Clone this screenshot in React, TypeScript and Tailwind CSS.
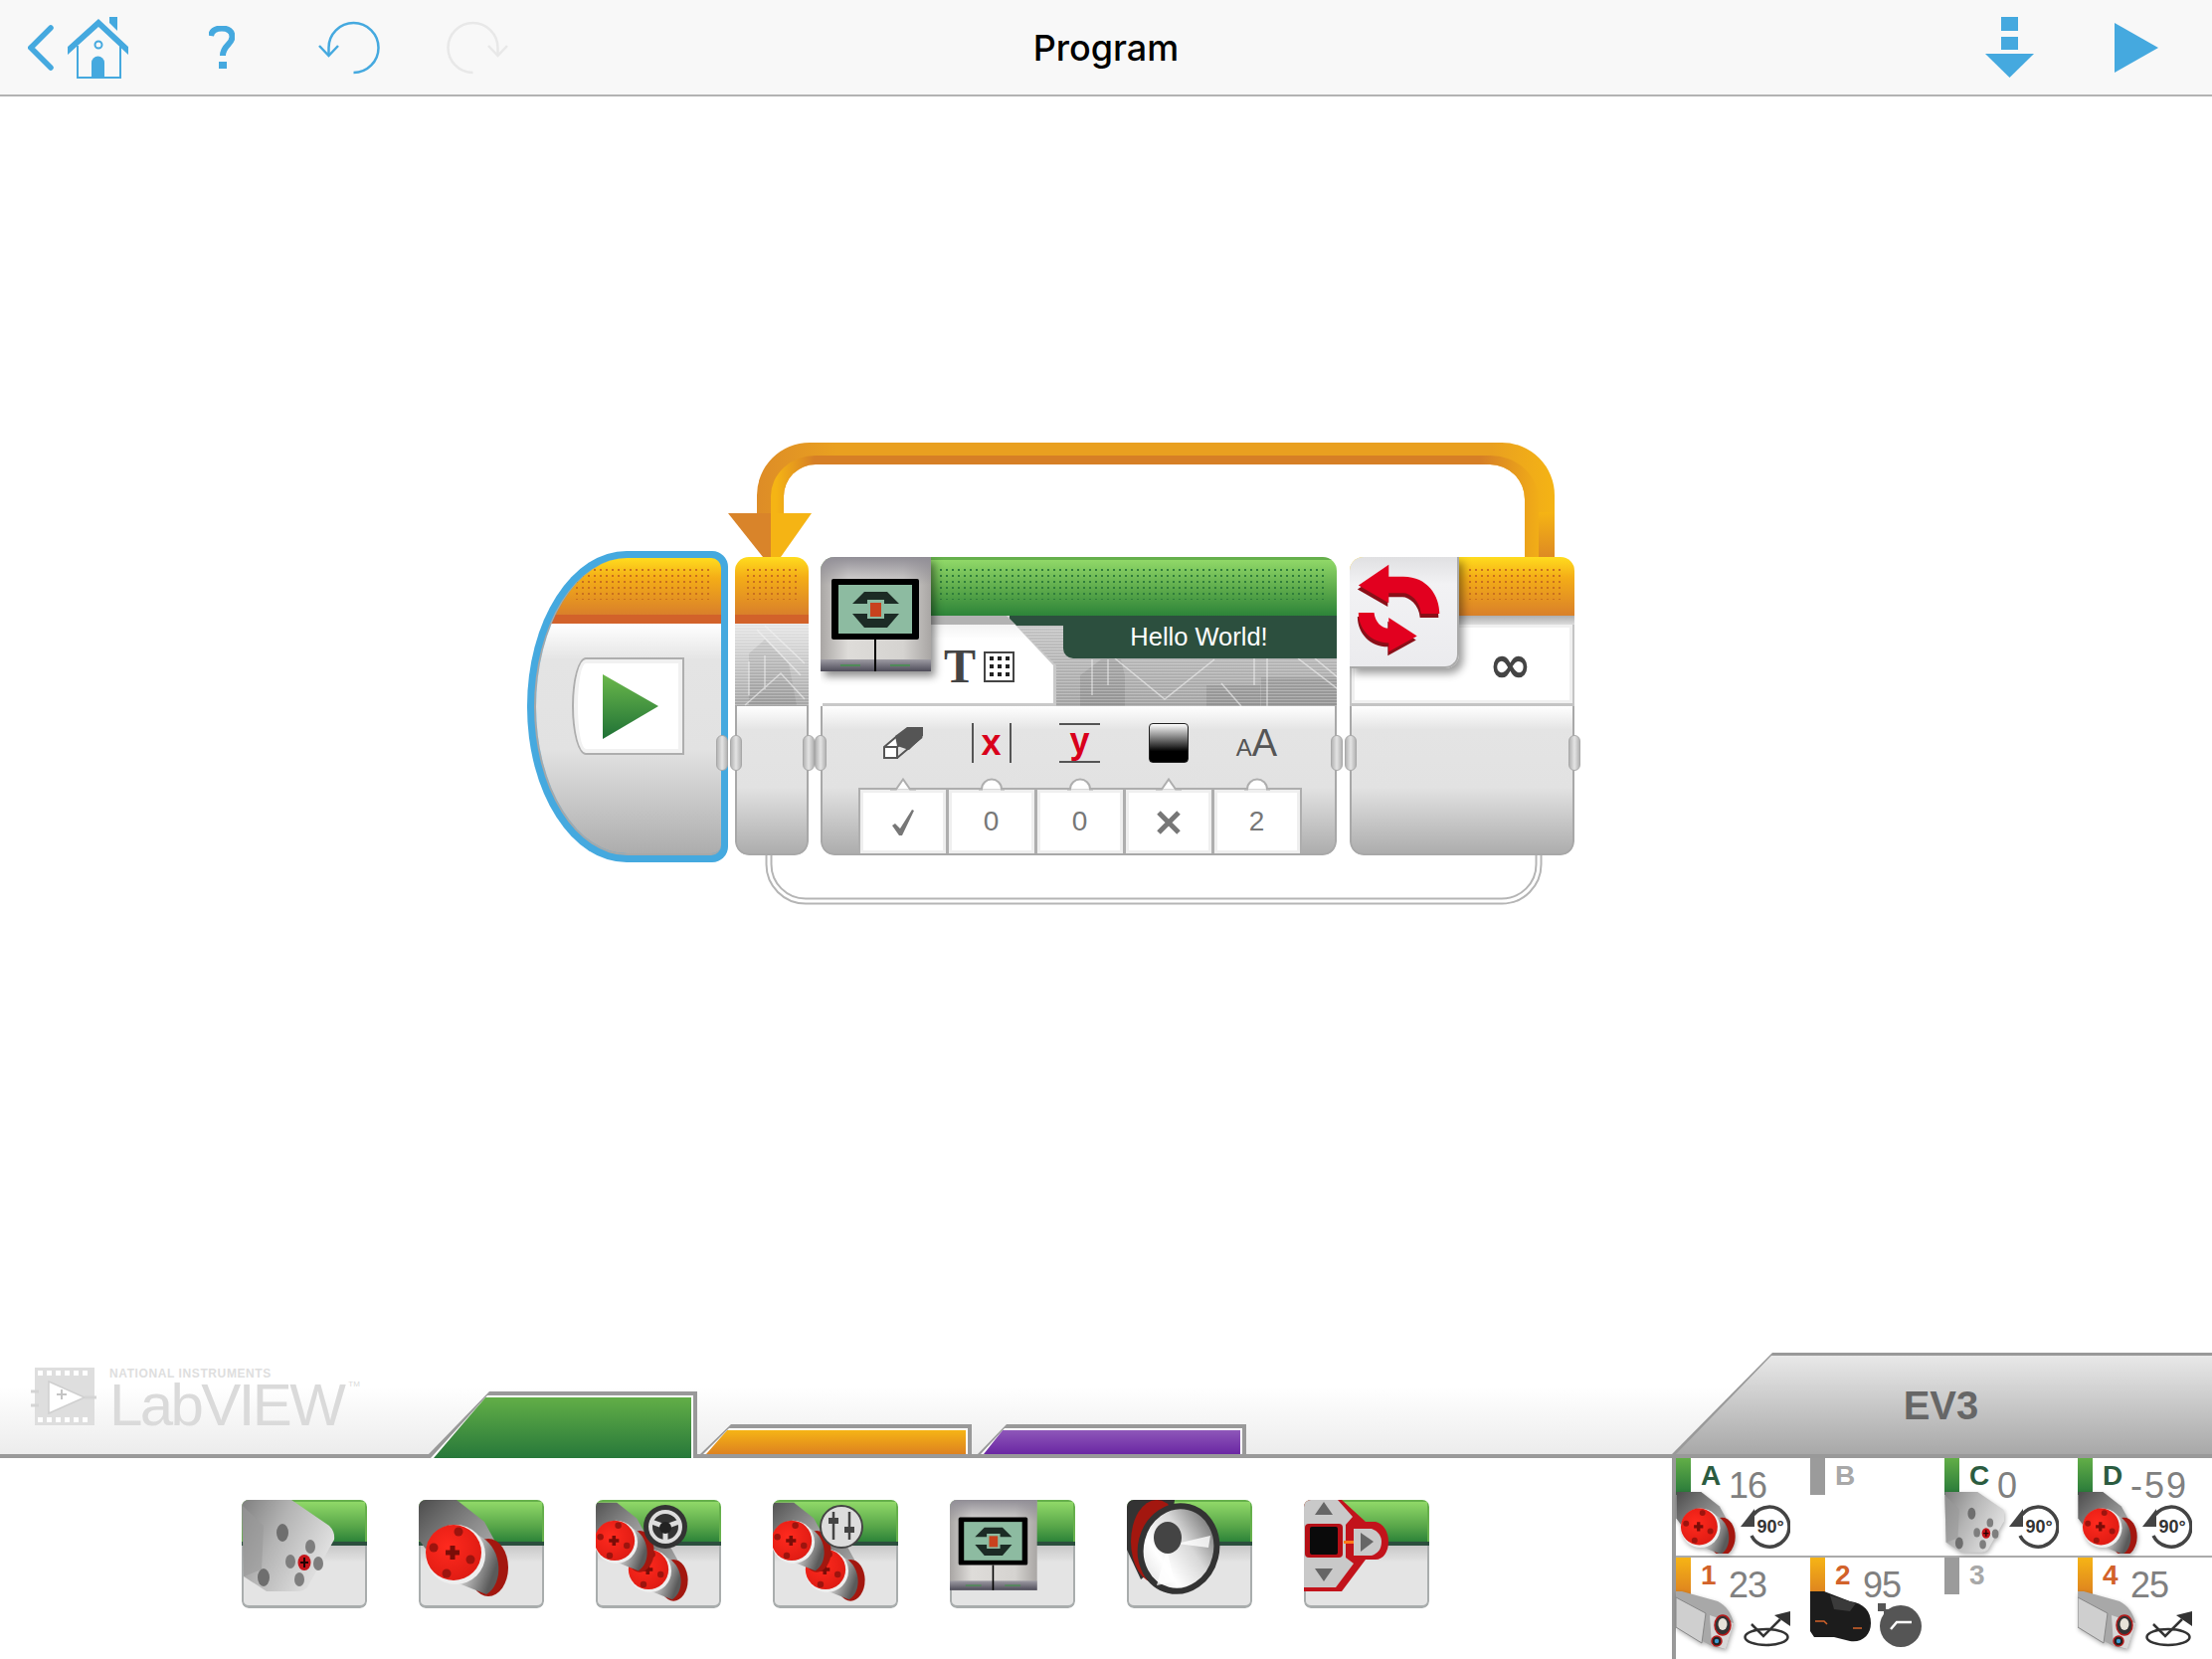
import type { ReactNode } from "react";

const BLUE = "#45a9df";

function Defs() {
	return (
		<svg className="absolute h-0 w-0" aria-hidden="true">
			<defs>
				<linearGradient id="motorBody" x1="0" y1="0" x2="1" y2="1">
					<stop offset="0" stopColor="#4d4d4d" />
					<stop offset="0.45" stopColor="#8c8c8c" />
					<stop offset="1" stopColor="#cfcfcf" />
				</linearGradient>
				<linearGradient id="cyl" x1="0" y1="0" x2="1" y2="0.5">
					<stop offset="0" stopColor="#5f5f5f" />
					<stop offset="0.55" stopColor="#c4c4c4" />
					<stop offset="1" stopColor="#5a5a5a" />
				</linearGradient>
				<radialGradient id="red" cx="0.4" cy="0.4" r="0.7">
					<stop offset="0" stopColor="#ff2a1e" />
					<stop offset="1" stopColor="#dc1a12" />
				</radialGradient>
				<linearGradient id="medBody" x1="0" y1="0" x2="1" y2="0.5">
					<stop offset="0" stopColor="#7f7f7f" />
					<stop offset="0.45" stopColor="#b4b4b4" />
					<stop offset="1" stopColor="#e2e2e2" />
				</linearGradient>
				<linearGradient id="bezel" x1="0" y1="0" x2="1" y2="0">
					<stop offset="0" stopColor="#a9a6a4" />
					<stop offset="0.25" stopColor="#dedcd9" />
					<stop offset="0.75" stopColor="#d5d3d0" />
					<stop offset="1" stopColor="#a9a6a4" />
				</linearGradient>
				<linearGradient id="bezelTop" x1="0" y1="0" x2="0" y2="1">
					<stop offset="0" stopColor="#918e96" />
					<stop offset="1" stopColor="#918e96" stopOpacity="0" />
				</linearGradient>
				<linearGradient id="bezelBot" x1="0" y1="0" x2="0" y2="1">
					<stop offset="0" stopColor="#9d9ba3" />
					<stop offset="1" stopColor="#4e4c59" />
				</linearGradient>
				<linearGradient id="playGreen" x1="0" y1="0" x2="0" y2="1">
					<stop offset="0" stopColor="#6bb84b" />
					<stop offset="1" stopColor="#1f7136" />
				</linearGradient>
				<linearGradient id="cone" x1="1" y1="0" x2="0.2" y2="1">
					<stop offset="0" stopColor="#4a4a4a" />
					<stop offset="0.45" stopColor="#d8d8d8" />
					<stop offset="0.75" stopColor="#ffffff" />
					<stop offset="1" stopColor="#e2e2e2" />
				</linearGradient>
				<linearGradient id="wireFill" gradientUnits="userSpaceOnUse" x1="70" y1="0" x2="874" y2="0">
					<stop offset="0" stopColor="#dd8c27" />
					<stop offset="0.1" stopColor="#e9a020" />
					<stop offset="0.92" stopColor="#e9a020" />
					<stop offset="1" stopColor="#f5b414" />
				</linearGradient>
				<linearGradient id="wireInner" gradientUnits="userSpaceOnUse" x1="90" y1="0" x2="860" y2="0">
					<stop offset="0" stopColor="#f5b414" />
					<stop offset="0.05" stopColor="#d67f26" />
					<stop offset="0.92" stopColor="#d67f26" />
					<stop offset="1" stopColor="#f3b016" />
				</linearGradient>
				<linearGradient id="wireDrop" x1="0" y1="0" x2="0" y2="1">
					<stop offset="0" stopColor="#f5b414" />
					<stop offset="1" stopColor="#de8a23" />
				</linearGradient>
				<linearGradient id="texLight" x1="0" y1="0" x2="0" y2="1">
					<stop offset="0" stopColor="#e6e6e6" />
					<stop offset="1" stopColor="#a6a6a6" />
				</linearGradient>
				<linearGradient id="texDark" x1="0" y1="0" x2="0" y2="1">
					<stop offset="0" stopColor="#c8c8c8" />
					<stop offset="1" stopColor="#a2a2a2" />
				</linearGradient>
				<pattern id="texLines" width="4" height="3" patternUnits="userSpaceOnUse">
					<rect width="4" height="1" fill="#ffffff" fillOpacity="0.28" />
				</pattern>
			</defs>
		</svg>
	);
}

function LargeMotor() {
	return (
		<g>
			<path d="M0 0H38L66 22L90 66L70 92L30 80L0 40Z" fill="url(#motorBody)" />
			<ellipse cx="70" cy="68" rx="20" ry="29" fill="#a3170f" />
			<path d="M42 25L64 38C84 50 86 84 68 95L30 80Z" fill="url(#cyl)" />
			<circle cx="37" cy="55" r="30" fill="#eeeeee" />
			<circle cx="35" cy="53" r="28" fill="url(#red)" />
			<circle cx="40" cy="32" r="4.5" fill="#9d140e" />
			<circle cx="15" cy="48" r="4.5" fill="#9d140e" />
			<circle cx="52" cy="60" r="4.5" fill="#9d140e" />
			<circle cx="28" cy="74" r="4.5" fill="#9d140e" />
			<path d="M31.5 46H36.5V50.5H41V55.5H36.5V60H31.5V55.5H27V50.5H31.5Z" fill="#7a0d08" />
		</g>
	);
}

function MediumMotor() {
	return (
		<g>
			<path d="M0 0H50L88 26Q94 32 93 40L66 88Q62 92 56 92L25 92L2 77Z" fill="url(#medBody)" />
			<path d="M0 5L22 26L20 70L2 77Z" fill="#9a9a9a" fillOpacity="0.6" />
			<ellipse cx="41" cy="33" rx="6" ry="9" fill="#6e6e6e" />
			<ellipse cx="69" cy="47" rx="5" ry="7" fill="#7e7e7e" />
			<ellipse cx="49" cy="62" rx="5" ry="7" fill="#7e7e7e" />
			<ellipse cx="77" cy="64" rx="5" ry="7" fill="#7e7e7e" />
			<ellipse cx="58" cy="80" rx="5" ry="7" fill="#7e7e7e" />
			<ellipse cx="22" cy="78" rx="6" ry="9" fill="#6e6e6e" />
			<ellipse cx="63" cy="63" rx="6.5" ry="8" fill="#c5141a" />
			<path d="M62 58H64V62H67V64H64V68H62V64H59V62H62Z" fill="#210404" />
		</g>
	);
}

function DisplayShape() {
	return (
		<g>
			<rect width="111" height="115" fill="url(#bezel)" />
			<rect width="111" height="28" fill="url(#bezelTop)" />
			<rect y="103" width="111" height="12" fill="url(#bezelBot)" />
			<rect x="11" y="22" width="88" height="61" rx="2" fill="#000" />
			<rect x="18" y="28" width="74" height="49" fill="#8dbba1" />
			<path d="M44 35H67L79 47H64V43H47V47H32Z" fill="#1c2b25" />
			<path d="M32 57H47V62H64V57H79L67 71H44Z" fill="#1c2b25" />
			<rect x="50" y="46" width="11" height="14" fill="#c8421e" />
			<rect x="54" y="83" width="2" height="32" fill="#000" />
			<rect x="20" y="108" width="20" height="2" fill="#4f8a58" />
			<rect x="70" y="108" width="20" height="2" fill="#4f8a58" />
		</g>
	);
}

function LoopArrows() {
	return (
		<svg viewBox="0 0 110 112" className="h-full w-full">
			<g fill="#8a0f18" transform="translate(-1 4)">
				<path d="M9 29L40 8V20H55C80 20 92 40 92 58H73C72 45 62 37 55 37H40V47Z" />
				<path d="M9 57H25C26 66 32 73 40 73V62L69 81L40 97V88C22 88 9 74 9 57Z" />
			</g>
			<g fill="#e2001f">
				<path d="M9 29L40 8V20H55C80 20 92 40 92 58H73C72 45 62 37 55 37H40V47Z" />
				<path d="M9 57H25C26 66 32 73 40 73V62L69 81L40 97V88C22 88 9 74 9 57Z" />
			</g>
		</svg>
	);
}

function Texture({ light }: { light?: boolean }) {
	return (
		<svg className="absolute inset-0 h-full w-full">
			<rect width="100%" height="100%" fill={light ? "url(#texLight)" : "url(#texDark)"} />
			{light ? (
				<path d="M14 82V30L30 16L54 40L62 82Z" fill="#000" fillOpacity="0.08" />
			) : (
				<path
					d="M24 91V60L45 44H65L69 60V91ZM151 91V70H205V91ZM206 91V62H283V91Z"
					transform="translate(237 0)"
					fill="#000"
					fillOpacity="0.09"
				/>
			)}
			<rect width="100%" height="100%" fill="url(#texLines)" />
			<g fill="none" stroke="#f2f2f2" strokeOpacity="0.6" strokeWidth="1.5">
				{light ? (
					<path d="M22 6L66 52M30 2L70 40M14 38V72M30 32V66M10 82L46 50L70 76" />
				) : (
					<path
						d="M59 43L109 84L159 44M36 44V80M52 44V70M166 68L186 91M199 43V70M212 43V91M243 43L286 76M260 43L283 62"
						transform="translate(237 0)"
					/>
				)}
			</g>
		</svg>
	);
}

function Pill({ className }: { className: string }) {
	return (
		<div
			className={`absolute top-[185px] z-10 h-[36px] w-[12px] rounded-full border border-[#a8a8a8] bg-gradient-to-r from-[#b4b4b4] via-[#e4e4e4] to-[#b4b4b4] ${className}`}
		/>
	);
}

function Dots({ className }: { className: string }) {
	return (
		<div
			className={`absolute bg-[radial-gradient(circle,_var(--tw-dot)_1px,_transparent_1.4px)] bg-[length:6px_6px] ${className}`}
		/>
	);
}

const orangeHead = "bg-[linear-gradient(#ffdc1e,#f4ad17_35%,#d9802a)]";
const bodyGrad = "bg-[linear-gradient(#ffffff,#e4e4e4_16%,#e2e2e2_55%,#adadad)]";

function ValueBox({ icon, notch, children }: { icon: ReactNode; notch: "tri" | "round"; children: ReactNode }) {
	return (
		<div className="flex w-[89px] flex-col items-center pt-[17px]">
			<div className="flex h-[40px] items-center justify-center">{icon}</div>
			<div className="relative mt-[25px] flex h-[66px] w-[90px] items-center justify-center border-2 border-b-0 border-[#aeaeae] bg-white text-[28px] leading-none text-[#777] shadow-[inset_0_0_0_3px_#efefef]">
				{notch === "tri" ? (
					<svg viewBox="0 0 26 12" className="absolute left-[30px] top-[-12px] h-[13px] w-[26px]">
						<path d="M0 11H6L13 1L20 11H26" fill="#fff" stroke="#aeaeae" strokeWidth="2" />
					</svg>
				) : (
					<svg viewBox="0 0 26 12" className="absolute left-[30px] top-[-12px] h-[13px] w-[26px]">
						<path d="M0 11H3C3 5 8 1 13 1C18 1 23 5 23 11H26" fill="#fff" stroke="#aeaeae" strokeWidth="2" />
					</svg>
				)}
				{children}
			</div>
		</div>
	);
}

function Program() {
	return (
		<div className="relative flex items-start">
			{/* start block */}
			<div className="relative h-[313px] w-[202px] shrink-0 rounded-[100px_16px_16px_100px/156px_16px_16px_156px] bg-[#45a9df] p-[7px]">
				<div className="flex h-full flex-col overflow-hidden rounded-[94px_10px_10px_94px/150px_10px_10px_150px] border-b-2 border-l-2 border-[#a8a8a8]">
					<div className={`relative h-[57px] shrink-0 ${orangeHead}`}>
						<Dots className="left-[38px] right-[8px] top-[9px] h-[33px] [--tw-dot:#c9701e]" />
					</div>
					<div className="h-[9px] shrink-0 bg-[#d2622a]" />
					<div className={`flex-1 pl-[36px] pt-[34px] ${bodyGrad}`}>
						<div className="flex h-[98px] w-[113px] items-center justify-center rounded-[14px_0_0_14px/49px_0_0_49px] border-2 border-[#aeaeae] bg-white pl-[4px] shadow-[inset_0_0_0_4px_#f1f1f1]">
							<svg viewBox="0 0 56 65" className="h-[65px] w-[56px]">
								<path d="M0 0L56 32L0 65Z" fill="url(#playGreen)" />
							</svg>
						</div>
					</div>
				</div>
			</div>

			{/* loop start */}
			<div className="relative ml-[7px] mt-[6px] flex h-[300px] w-[74px] shrink-0 flex-col overflow-hidden rounded-[14px]">
				<div className={`relative h-[58px] shrink-0 ${orangeHead}`}>
					<Dots className="left-[10px] right-[10px] top-[10px] h-[33px] [--tw-dot:#c9701e]" />
				</div>
				<div className="h-[9px] shrink-0 bg-[#d2622a]" />
				<div className="relative h-[83px] shrink-0">
					<Texture light />
				</div>
				<div className={`flex-1 rounded-b-[14px] border-x-2 border-b-2 border-[#a8a8a8] ${bodyGrad}`} />
			</div>

			{/* display block */}
			<div className="relative ml-[12px] mt-[6px] flex h-[300px] w-[519px] shrink-0 flex-col overflow-hidden rounded-[14px]">
				<div className="relative h-[59px] shrink-0 border-t-[3px] border-[#66b04c] bg-[linear-gradient(#90d868,#5aa84a_55%,#2d8439)]">
					<Dots className="left-[118px] right-[10px] top-[7px] h-[33px] [--tw-dot:#2f7d3b]" />
				</div>
				<div className="relative flex h-[91px] shrink-0 justify-end">
					<Texture />
					<div className="absolute left-[190px] right-0 top-0 h-[10px] bg-[#2c4f3e]" />
					<div className="relative flex h-[43px] w-[275px] items-center justify-center rounded-bl-[10px] bg-[#2c4f3e] pr-[2px] text-[25.5px] leading-none text-white">
						Hello World!
					</div>
					<div className="absolute inset-0 w-[237px] bg-[#c9c9c9] [clip-path:polygon(0_0,187px_0,237px_50px,237px_91px,0_91px)]">
						<div className="h-full w-full bg-[linear-gradient(#b2b2b2,#b2b2b2_9px,#f3f3f3_9px,#fff_24px)] pb-[3px] pl-[124px] pt-[27px] [clip-path:polygon(0_0,187px_0,234px_50px,234px_88px,2px_88px,2px_100%,0_100%)]">
							<div className="flex items-center gap-[8px]">
								<span className="[font-family:'Liberation_Serif',serif] text-[48px] font-bold leading-none text-[#444]">
									T
								</span>
								<svg viewBox="0 0 31 31" className="h-[31px] w-[31px]">
									<rect x="1" y="1" width="29" height="29" fill="#fff" stroke="#444" strokeWidth="2" />
									<g fill="#222">
										<rect x="6" y="5" width="4" height="4" />
										<rect x="14" y="5" width="4" height="4" />
										<rect x="22" y="5" width="4" height="4" />
										<rect x="6" y="13" width="4" height="4" />
										<rect x="14" y="13" width="4" height="4" />
										<rect x="22" y="13" width="4" height="4" />
										<rect x="6" y="21" width="4" height="4" />
										<rect x="14" y="21" width="4" height="4" />
										<rect x="22" y="21" width="4" height="4" />
									</g>
								</svg>
							</div>
						</div>
					</div>
				</div>
				<div className={`flex flex-1 rounded-b-[14px] border-x-2 border-b-2 border-[#a8a8a8] pl-[36px] ${bodyGrad}`}>
					<ValueBox
						notch="tri"
						icon={
							<svg viewBox="0 0 40 32" className="h-[32px] w-[40px]">
								<path d="M1 20L14 9H26L14 20V31H1Z" fill="#fff" stroke="#555" strokeWidth="2" />
								<path d="M14 20H1M14 31L39 10" stroke="#555" strokeWidth="2" fill="none" />
								<path d="M12 9L24 0H40V9L26 23L14 19Z" fill="#555" />
							</svg>
						}
					>
						<svg viewBox="0 0 24 28" className="mt-[2px] h-[28px] w-[24px]">
							<path d="M1 17L4 15L9 20L21 1L23 2L11 27H8Z" fill="#777" />
						</svg>
					</ValueBox>
					<ValueBox
						notch="round"
						icon={
							<div className="flex h-[40px] w-[40px] items-center justify-center border-x-2 border-[#555] text-[36px] font-bold leading-none text-[#d9001b]">
								x
							</div>
						}
					>
						0
					</ValueBox>
					<ValueBox
						notch="round"
						icon={
							<div className="flex h-[40px] w-[41px] items-center justify-center border-y-2 border-[#555] pb-[4px] text-[36px] font-bold leading-none text-[#d9001b]">
								y
							</div>
						}
					>
						0
					</ValueBox>
					<ValueBox
						notch="tri"
						icon={
							<div className="h-[40px] w-[40px] rounded-[4px] border border-[#222] bg-[linear-gradient(#fff,#000_72%)]" />
						}
					>
						<svg viewBox="0 0 26 26" className="mt-[2px] h-[26px] w-[26px]">
							<path d="M3 3L23 23M23 3L3 23" fill="none" stroke="#777" strokeWidth="5" />
						</svg>
					</ValueBox>
					<ValueBox
						notch="round"
						icon={
							<div className="flex items-baseline text-[#555]">
								<span className="text-[24px] leading-none">A</span>
								<span className="text-[38px] leading-none">A</span>
							</div>
						}
					>
						2
					</ValueBox>
				</div>
				<div className="absolute left-0 top-0 h-[115px] w-[111px] shadow-[4px_5px_8px_rgba(0,0,0,0.45)]">
					<svg viewBox="0 0 111 115" className="h-full w-full">
						<DisplayShape />
					</svg>
				</div>
			</div>

			{/* loop end */}
			<div className="relative ml-[13px] mt-[6px] flex h-[300px] w-[226px] shrink-0 flex-col overflow-hidden rounded-[14px]">
				<div className={`relative h-[59px] shrink-0 ${orangeHead}`}>
					<Dots className="left-[118px] right-[10px] top-[10px] h-[33px] [--tw-dot:#c9701e]" />
				</div>
				<div className="h-[9px] shrink-0 bg-[linear-gradient(#aeaeae,#dcdcdc)]" />
				<div className="flex h-[82px] shrink-0 items-center justify-end border-x-2 border-b-[3px] border-[#c4c4c4] bg-white pr-[41px] shadow-[inset_0_0_0_3px_#f0f0f0]">
					<span className="[font-family:'DejaVu_Sans',sans-serif] text-[52px] font-bold leading-none text-[#444]">∞</span>
				</div>
				<div className={`flex-1 rounded-b-[14px] border-x-2 border-b-2 border-[#a8a8a8] ${bodyGrad}`} />
				<div className="absolute left-0 top-0 h-[112px] w-[110px] rounded-br-[14px] border-b-2 border-r-2 border-[#aaa] bg-[linear-gradient(#e0e0e2,#f2f2f4_25%,#ebebee)] shadow-[4px_5px_8px_rgba(0,0,0,0.4)]">
					<LoopArrows />
				</div>
			</div>

			<Pill className="left-[190px]" />
			<Pill className="left-[204px]" />
			<Pill className="left-[277px]" />
			<Pill className="left-[289px]" />
			<Pill className="left-[808px]" />
			<Pill className="left-[822px]" />
			<Pill className="left-[1047px]" />

			{/* wires */}
			<svg className="pointer-events-none absolute left-[160px] top-[-114px]" width="910" height="480" viewBox="0 0 910 480">
				<path d="M71 80V58A53 53 0 0 1 124 5H820A53 53 0 0 1 873 58V120H843V62A35 35 0 0 0 808 27H130A32 32 0 0 0 98 59V80Z" fill="url(#wireFill)" />
				<path d="M85 80V59A45 41 0 0 1 130 18H808A49 44 0 0 1 857 62V120H843V62A35 35 0 0 0 808 27H130A32 32 0 0 0 98 59V80Z" fill="url(#wireInner)" />
				<rect x="857" y="75" width="16" height="45" fill="url(#wireDrop)" />
				<path d="M42 76H85V120H77Z" fill="#d9842a" />
				<path d="M85 76H126L95 120H85Z" fill="#f5b414" />
				<path d="M83 420V429A37 37 0 0 0 120 466H820A37 37 0 0 0 857 429V420" fill="none" stroke="#b5b5b5" strokeWidth="7" />
				<path d="M83 420V429A37 37 0 0 0 120 466H820A37 37 0 0 0 857 429V420" fill="none" stroke="#fff" strokeWidth="3" />
			</svg>
		</div>
	);
}

function PaletteTile({ children }: { children: ReactNode }) {
	return (
		<div className="relative h-[109px] w-[126px] overflow-hidden rounded-[7px]">
			<div className="h-[42px] border-x-2 border-t-2 border-[#66b04c] bg-[linear-gradient(#90d868,#5aa84a_60%,#2d8439)]" />
			<div className="h-[4px] bg-[#2c4f3e]" />
			<div className="h-[63px] rounded-b-[7px] border-x-2 border-b-[3px] border-[#a9adad] bg-[linear-gradient(#c8c8c8,#e4e4e4_28%)]" />
			<svg viewBox="0 0 126 109" className="absolute inset-0 h-full w-full">
				{children}
			</svg>
		</div>
	);
}

function Sensor() {
	return (
		<svg viewBox="0 0 61 59" className="h-[59px] w-[61px] shrink-0 drop-shadow-[1px_2px_2px_rgba(0,0,0,0.3)]">
			<path d="M0 0L6 0L42 10C50 14 56 22 58 32L50 58L38 56L0 36Z" fill="#a8a8a8" />
			<path d="M0 6L30 22L26 52L0 36Z" fill="#cfcfcf" stroke="#888" strokeWidth="1" />
			<path d="M34 24L58 32L50 58L36 54Z" fill="#d8d8d8" />
			<ellipse cx="47" cy="34" rx="8" ry="10" fill="#333" stroke="#b51a1a" strokeWidth="1.5" />
			<ellipse cx="47" cy="33" rx="4.5" ry="6" fill="#e6e2d8" />
			<ellipse cx="41" cy="50" rx="5" ry="5" fill="#222" stroke="#b51a1a" strokeWidth="1.5" />
			<circle cx="41" cy="50" r="2.2" fill="#3d9ad1" />
		</svg>
	);
}

function GyroIcon() {
	return (
		<svg viewBox="0 0 48 36" className="h-[36px] w-[48px]">
			<ellipse cx="23" cy="26" rx="21.5" ry="8" fill="none" stroke="#333" strokeWidth="2.5" />
			<path d="M8 13L20 25L37 8" fill="none" stroke="#333" strokeWidth="2.5" />
			<path d="M31 4L47 0V15Z" fill="#333" />
		</svg>
	);
}

function RotationIcon() {
	return (
		<svg viewBox="0 0 50 44" className="h-[44px] w-[50px]">
			<path d="M13 10A20 20 0 1 1 11 31" fill="none" stroke="#444" strokeWidth="3.5" />
			<path d="M0 22L14 4V22Z" fill="#444" />
			<text x="30" y="28" textAnchor="middle" fontSize="18" fontWeight="700" fill="#333" fontFamily="Liberation Sans, sans-serif">
				90°
			</text>
		</svg>
	);
}

function MotorIcon({ medium }: { medium?: boolean }) {
	return (
		<svg viewBox="0 0 90 94" className="h-[62px] w-[60px] shrink-0 drop-shadow-[1px_2px_2px_rgba(0,0,0,0.3)]">
			{medium ? <MediumMotor /> : <LargeMotor />}
		</svg>
	);
}

type PortProps = {
	strip: string;
	letter: string;
	letterColor: string;
	value?: string;
	children?: ReactNode;
};

function Port({ strip, letter, letterColor, value, children }: PortProps) {
	return (
		<div className="min-w-0">
			<div className="flex h-[37px] items-start">
				<div className={`h-[37px] w-[15px] shrink-0 ${strip}`} />
				<span className={`ml-[10px] mt-[4px] w-[20px] text-[28px] font-bold leading-none ${letterColor}`}>{letter}</span>
				{value && (
					<span
						className={`ml-[8px] mt-[10px] text-[36px] leading-none text-[#808080] ${
							value.startsWith("-") ? "tracking-[2px]" : "tracking-[-1px]"
						}`}
					>
						{value}
					</span>
				)}
			</div>
			{children && <div className="-mt-[3px] flex items-start">{children}</div>}
		</div>
	);
}

const greenStrip = "bg-[linear-gradient(#62ae47,#27783a)]";
const orangeStrip = "bg-[linear-gradient(#f6b415,#dd8220)]";
const grayStrip = "bg-[#9b9b9b]";

function DoubleMotor() {
	return (
		<>
			<g transform="translate(27.8 31.8) scale(0.72)">
				<LargeMotor />
			</g>
			<g transform="translate(-6.2 2.8) scale(0.72)">
				<LargeMotor />
			</g>
		</>
	);
}

export default function App() {
	return (
		<div className="flex h-[1668px] w-[2224px] flex-col overflow-hidden bg-white [font-family:'Liberation_Sans',Arial,sans-serif]">
			<Defs />

			{/* top bar */}
			<header className="grid h-[97px] shrink-0 grid-cols-[1fr_auto_1fr] items-center border-b-2 border-[#b2b2b2] bg-[#f8f8f8]">
				<div className="flex items-center pl-[28px]">
					<svg viewBox="0 0 26 46" className="h-[46px] w-[26px]">
						<path d="M23 3L3 23L23 43" fill="none" stroke={BLUE} strokeWidth="5.5" strokeLinecap="round" />
					</svg>
					<svg viewBox="0 0 61 62" className="ml-[14px] h-[62px] w-[61px]">
						<path d="M31 2L61 30V38L31 10L0 38V30Z" fill={BLUE} />
						<path d="M42 0H50V14L42 6Z" fill={BLUE} />
						<path d="M10 29V61H53V29" fill="none" stroke={BLUE} strokeWidth="2" />
						<path d="M24 62V46A6.5 6.5 0 0 1 37 46V62Z" fill={BLUE} />
						<circle cx="31" cy="28" r="3.5" fill="none" stroke={BLUE} strokeWidth="2" />
					</svg>
					<svg viewBox="0 0 26 43" className="ml-[81px] h-[43px] w-[26px]">
						<path d="M2 10C3 4 8 2.5 13 2.5C20 2.5 23.5 6 23.5 11C23.5 19 14 19 14 30" fill="none" stroke={BLUE} strokeWidth="6" />
						<rect x="10" y="36" width="8" height="7" fill={BLUE} />
					</svg>
					<svg viewBox="0 0 63 54" className="ml-[84px] h-[54px] w-[63px]">
						<path d="M10.5 35V27A25 25 0 1 1 35.5 52" fill="none" stroke={BLUE} strokeWidth="2.5" />
						<path d="M1 25L10.5 35L20 25" fill="none" stroke={BLUE} strokeWidth="2.5" />
					</svg>
					<svg viewBox="0 0 63 54" className="ml-[65px] h-[54px] w-[63px] -scale-x-100">
						<path d="M10.5 35V27A25 25 0 1 1 35.5 52" fill="none" stroke="#e8e8e8" strokeWidth="2.5" />
						<path d="M1 25L10.5 35L20 25" fill="none" stroke="#e8e8e8" strokeWidth="2.5" />
					</svg>
				</div>
				<h1 className="[font-family:Inter,sans-serif] text-[36px] font-medium leading-none text-black">Program</h1>
				<div className="flex items-center justify-end pr-[54px]">
					<svg viewBox="0 0 49 61" className="h-[61px] w-[49px]">
						<rect x="16" y="0" width="17" height="14" fill={BLUE} />
						<rect x="16" y="20" width="17" height="13" fill={BLUE} />
						<path d="M0 37H49L24.5 61Z" fill={BLUE} />
					</svg>
					<svg viewBox="0 0 44 50" className="ml-[81px] h-[50px] w-[44px]">
						<path d="M0 0L44 25L0 50Z" fill={BLUE} />
					</svg>
				</div>
			</header>

			{/* canvas */}
			<main className="flex-1 pl-[530px] pt-[457px]">
				<Program />
			</main>

			{/* tab band */}
			<div className="flex h-[126px] shrink-0 items-end border-b-4 border-[#999] bg-[linear-gradient(#fff,#fff_45%,#ececec)]">
				<div className="mb-[24px] ml-[31px] flex w-[324px] items-start self-end">
					<svg viewBox="0 0 66 58" className="h-[58px] w-[66px] shrink-0">
						<rect x="4" y="0" width="60" height="58" fill="#dedede" />
						<g fill="#fff">
							<rect x="7" y="3" width="5" height="5" />
							<rect x="16" y="3" width="5" height="5" />
							<rect x="25" y="3" width="5" height="5" />
							<rect x="34" y="3" width="5" height="5" />
							<rect x="43" y="3" width="5" height="5" />
							<rect x="52" y="3" width="5" height="5" />
							<rect x="7" y="50" width="5" height="5" />
							<rect x="16" y="50" width="5" height="5" />
							<rect x="25" y="50" width="5" height="5" />
							<rect x="34" y="50" width="5" height="5" />
							<rect x="43" y="50" width="5" height="5" />
							<rect x="52" y="50" width="5" height="5" />
						</g>
						<path d="M18 14L54 30L18 46Z" fill="#fff" stroke="#cfcfcf" strokeWidth="1.5" />
						<path d="M26 26H30V22H32V26H36V28H32V32H30V28H26Z" fill="#c4c4c4" />
						<path d="M0 24H8M0 38H8M54 30H66" stroke="#d4d4d4" strokeWidth="3" />
					</svg>
					<div className="ml-[13px] flex flex-col">
						<span className="block text-[12px] font-bold leading-none tracking-[0.6px] text-[#dedede]">NATIONAL INSTRUMENTS</span>
						<div className="mt-[1px] flex items-start">
							<span className="block text-[60px] leading-[50px] tracking-[-2.6px] text-[#dadada]">LabVIEW</span>
							<span className="ml-[5px] block text-[8px] leading-none text-[#dadada]">TM</span>
						</div>
					</div>
				</div>

				<div className="-mb-1 ml-[76px] h-[67px] w-[270px] bg-[#999] pr-[4px] pt-[4px] [clip-path:polygon(61px_0,100%_0,100%_100%,0_100%,0_63px)]">
					<div className="h-full bg-white pr-[2px] pt-[2px] [clip-path:polygon(59px_0,100%_0,100%_100%,2px_100%)]">
						<div className="h-full bg-[linear-gradient(#62ae47,#27783a)] [clip-path:polygon(57px_0,100%_0,100%_100%,5px_100%)]" />
					</div>
				</div>
				<div className="ml-[3px] h-[30px] w-[273px] bg-[#999] pr-[4px] pt-[4px] [clip-path:polygon(31px_0,100%_0,100%_100%,0_100%)]">
					<div className="h-full bg-white pr-[2px] pt-[2px] [clip-path:polygon(29px_0,100%_0,100%_100%,3px_100%)]">
						<div className="h-full bg-[linear-gradient(#f6b415,#dd8220)] [clip-path:polygon(27px_0,100%_0,100%_100%,6px_100%)]" />
					</div>
				</div>
				<div className="ml-[6px] h-[30px] w-[270px] bg-[#999] pr-[4px] pt-[4px] [clip-path:polygon(29px_0,100%_0,100%_100%,0_100%)]">
					<div className="h-full bg-white pr-[2px] pt-[2px] [clip-path:polygon(27px_0,100%_0,100%_100%,3px_100%)]">
						<div className="h-full bg-[linear-gradient(#8e57b9,#6a27a3)] [clip-path:polygon(25px_0,100%_0,100%_100%,6px_100%)]" />
					</div>
				</div>

				<div className="ml-auto h-[102px] w-[543px] bg-[#999] pt-[3px] [clip-path:polygon(101px_0,100%_0,100%_100%,0_100%)]">
					<div className="flex h-full items-center justify-center bg-[linear-gradient(#e8e8e8,#a8a8a8)] text-[40px] font-bold leading-none text-[#666] [clip-path:polygon(100px_0,100%_0,100%_100%,4px_100%)]">
						<span className="ml-[-2px]">EV3</span>
					</div>
				</div>
			</div>

			{/* palette */}
			<div className="flex h-[202px] shrink-0 justify-between">
				<div className="flex items-start gap-[52px] pl-[243px] pt-[42px]">
					<PaletteTile>
						<MediumMotor />
					</PaletteTile>
					<PaletteTile>
						<LargeMotor />
					</PaletteTile>
					<PaletteTile>
						<DoubleMotor />
						<circle cx="70" cy="27" r="22" fill="#333" />
						<circle cx="70" cy="27" r="15" fill="none" stroke="#ddd" strokeWidth="4" />
						<path d="M56 22L70 27L84 22M70 27V41" fill="none" stroke="#ddd" strokeWidth="5" />
						<circle cx="70" cy="28" r="6" fill="#222" />
					</PaletteTile>
					<PaletteTile>
						<DoubleMotor />
						<circle cx="69" cy="27" r="21" fill="#dcdcdc" stroke="#444" strokeWidth="2" />
						<path d="M61 12V40M77 12V40" stroke="#444" strokeWidth="2.5" />
						<rect x="56" y="18" width="10" height="6" fill="#444" />
						<rect x="72" y="27" width="10" height="6" fill="#444" />
					</PaletteTile>
					<PaletteTile>
						<g transform="scale(0.79)">
							<DisplayShape />
						</g>
					</PaletteTile>
					<PaletteTile>
						<path d="M0 0H48L40 60L14 80L0 50Z" fill="#333" />
						<ellipse cx="30" cy="42" rx="26" ry="42" fill="#a3170f" />
						<ellipse cx="52" cy="49" rx="38" ry="43" transform="rotate(14 52 49)" fill="url(#cone)" stroke="#333" strokeWidth="6" />
						<path d="M40 50L30 86L48 82ZM50 44L84 36L82 48Z" fill="#fff" fillOpacity="0.8" />
						<ellipse cx="41" cy="38" rx="14" ry="16" fill="#444" />
					</PaletteTile>
					<PaletteTile>
						<path d="M0 0H38L62 22H72C80 24 85 32 85 42C85 52 80 60 72 60H62L38 92H0Z" fill="#c2131b" />
						<path d="M0 0H34L49 17L42 25V58L50 64L32 88H0Z" fill="#c9c9c9" />
						<path d="M50 29H68C74 31 78 36 78 42C78 50 74 54 68 56H50Z" fill="#c9c9c9" />
						<rect x="1" y="24" width="38" height="34" rx="4" fill="#b50f16" />
						<rect x="6" y="27" width="28" height="28" rx="2" fill="#0a0a0a" />
						<path d="M11 15L20 2L29 15Z" fill="#666" />
						<path d="M11 69L20 82L29 69Z" fill="#666" />
						<path d="M57 33L70 42L57 52Z" fill="#666" />
						<rect x="40" y="41" width="10" height="3" fill="#ff7a1a" />
					</PaletteTile>
				</div>

				<div className="grid h-full w-[543px] grid-cols-[135px_135px_134px_135px] grid-rows-[100px_1fr] border-l-4 border-[#999]">
					<div className="col-span-4 grid grid-cols-subgrid border-b-2 border-[#aaa]">
						<Port strip={greenStrip} letter="A" letterColor="text-[#2b5c40]" value="16">
							<MotorIcon />
							<div className="ml-[5px] mt-[13px]">
								<RotationIcon />
							</div>
						</Port>
						<Port strip={grayStrip} letter="B" letterColor="text-[#a8a8a8]" />
						<Port strip={greenStrip} letter="C" letterColor="text-[#2b5c40]" value="0">
							<MotorIcon medium />
							<div className="ml-[5px] mt-[13px]">
								<RotationIcon />
							</div>
						</Port>
						<Port strip={greenStrip} letter="D" letterColor="text-[#2b5c40]" value="-59">
							<MotorIcon />
							<div className="ml-[5px] mt-[13px]">
								<RotationIcon />
							</div>
						</Port>
					</div>
					<div className="col-span-4 grid grid-cols-subgrid">
						<Port strip={orangeStrip} letter="1" letterColor="text-[#d2622a]" value="23">
							<Sensor />
							<div className="ml-[7px] mt-[20px]">
								<GyroIcon />
							</div>
						</Port>
						<Port strip={orangeStrip} letter="2" letterColor="text-[#d2622a]" value="95">
							<svg viewBox="0 0 61 54" className="h-[54px] w-[61px] shrink-0">
								<path d="M0 0H14L40 10C54 12 61 20 61 32C61 44 52 52 40 50L24 46H4L0 40Z" fill="#1c1c1c" />
								<path d="M20 4L46 12L40 20L24 18Z" fill="#3a3a3a" />
								<path d="M5 30H14L17 33M43 37H52" fill="none" stroke="#d2622a" strokeWidth="1.5" />
							</svg>
							<svg viewBox="0 0 44 44" className="ml-[7px] mt-[12px] h-[44px] w-[44px]">
								<circle cx="23" cy="23" r="21" fill="#555" />
								<path d="M0 0H8V8H0ZM6 6H12V12H6Z" fill="#555" />
								<path d="M13 26L19 19H34" fill="none" stroke="#fff" strokeWidth="2.5" />
							</svg>
						</Port>
						<Port strip={grayStrip} letter="3" letterColor="text-[#a8a8a8]" />
						<Port strip={orangeStrip} letter="4" letterColor="text-[#d2622a]" value="25">
							<Sensor />
							<div className="ml-[7px] mt-[20px]">
								<GyroIcon />
							</div>
						</Port>
					</div>
				</div>
			</div>
		</div>
	);
}
